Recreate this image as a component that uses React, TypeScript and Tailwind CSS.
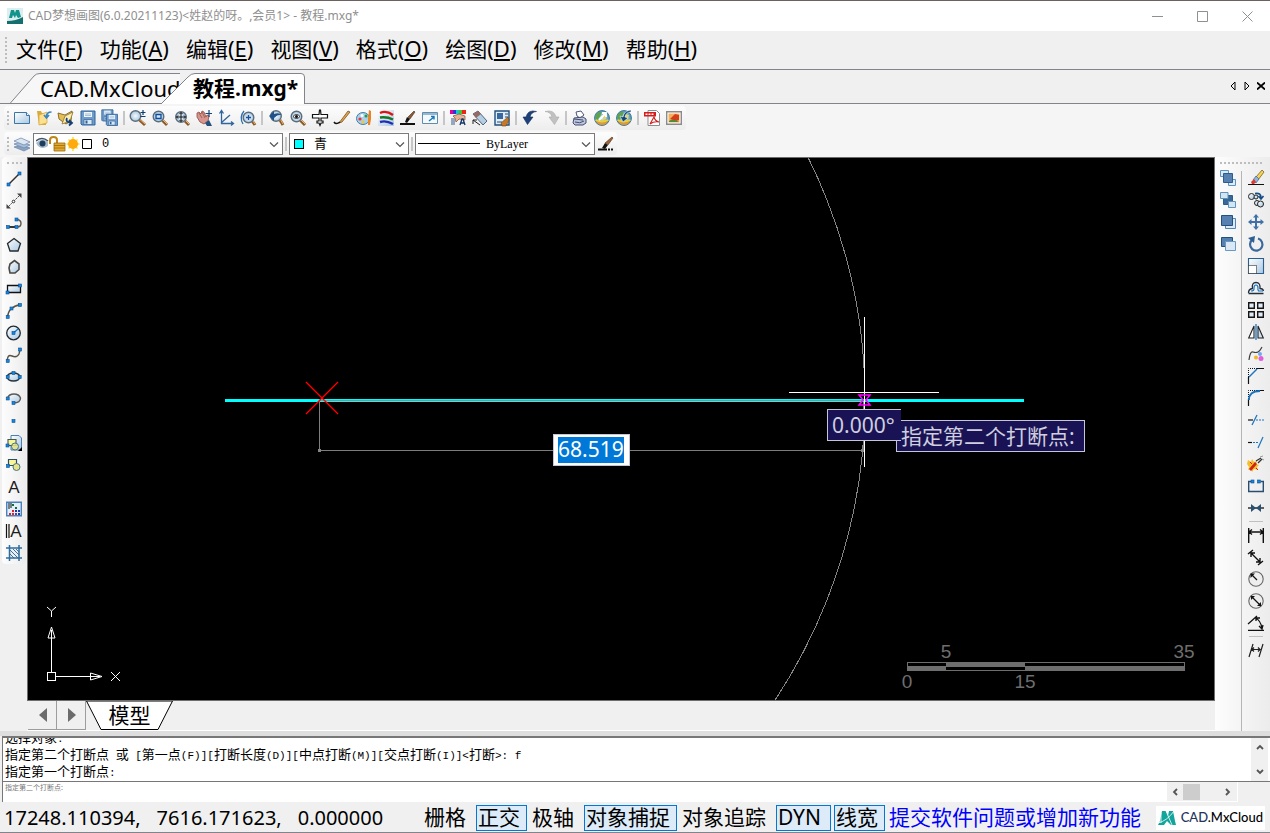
import { useState } from 'react'
import type { ReactNode } from 'react'
import clsx from 'clsx'

interface Tool {
  name: string
  icon: ReactNode
}

const MENUS = [
  { text: '文件', hotkey: 'F' },
  { text: '功能', hotkey: 'A' },
  { text: '编辑', hotkey: 'E' },
  { text: '视图', hotkey: 'V' },
  { text: '格式', hotkey: 'O' },
  { text: '绘图', hotkey: 'D' },
  { text: '修改', hotkey: 'M' },
  { text: '帮助', hotkey: 'H' },
]

const Lens = ({ children, x = 6.5, y = 6.5 }: { children?: ReactNode; x?: number; y?: number }) => (
  <>
    <path d={`M${x + 4} ${y + 4}L15 15`} stroke="#8a5a2a" strokeWidth="3" />
    <path d={`M${x + 4.5} ${y + 3.5}L15 14`} stroke="#f0b568" strokeWidth="1" />
    <circle cx={x} cy={y} r="5.300" fill="url(#lens)" stroke="#5b6d7d" strokeWidth="1.4" />
    {children}
  </>
)

const Globe = ({ children }: { children?: ReactNode }) => (
  <>
    <circle cx="8" cy="8" r="7.500" fill="url(#globe)" stroke="#356a8c" strokeWidth=".8" />
    <path d="M1.500 5q3-4 6-3l-1 4-3 4-2-1z" fill="#5da34b" />
    <path d="M9 4l4 1-1 4-3 1z" fill="#e9d26a" />
    <path d="M2 11q5 3 12 0l-2 3q-4 2-8 0z" fill="#e8952c" />
    <path d="M1.500 10q6 3 13 0" stroke="#f4cf2b" strokeWidth="1.8" fill="none" />
    {children}
  </>
)

const Floppy = ({ x = 0, y = 0, s = 1 }: { x?: number; y?: number; s?: number }) => (
  <g transform={`translate(${x} ${y}) scale(${s})`}>
    <path d="M1 1h14v14H2l-1-1z" fill="#6f9ccb" stroke="#2f629b" />
    <path d="M4 2h8v5H4z" fill="#eef5fb" />
    <path d="M5 4h6M5 5.500h6" stroke="#8aa9c8" strokeWidth=".7" />
    <path d="M4 9.500h8v5H4z" fill="#dbe7f2" stroke="#2f629b" strokeWidth=".7" />
    <path d="M5.500 10.500h2v3h-2z" fill="#2f629b" />
  </g>
)

const Node = ({ x, y }: { x: number; y: number }) => (
  <rect x={x - 1.5} y={y - 1.5} width="3" height="3" fill="#1687e0" stroke="#0b4f92" strokeWidth=".6" />
)

const STANDARD_TOOLS: Tool[][] = [
  [
    { name: '新建', icon: <><path d="M.5 2.500h12l3 3v8H.5z" fill="url(#paper)" stroke="#3b76a6" /><path d="M12.500 2.500v3h3" fill="#fff" stroke="#3b76a6" /></> },
    { name: '打开', icon: <><path d="M1 1h4l1 2h4v12H3z" fill="#d9ab3c" /><path d="M3 15V5l8-3v11z" fill="#fbe08f" stroke="#d9a536" strokeWidth=".7" /><path d="M15.500 2q-5 0-5 5M8 5l2.500 3L13 5" stroke="#3387c9" strokeWidth="1.7" fill="none" /></> },
    { name: '打开云图', icon: <><path d="M0 3l7 2 7-4-1 10-5 3-7-5z" fill="#e6be55" stroke="#7d6424" strokeWidth=".9" /><path d="M4 14l3-8 8-4-3 9z" fill="#fcedb0" stroke="#8d7432" strokeWidth=".8" /><path d="M9 8q-2 4 4 5M11 10l3 3-3 2.500" stroke="#143f77" strokeWidth="1.8" fill="none" /></> },
    { name: '保存', icon: <Floppy /> },
    { name: '另存为', icon: <><Floppy s={0.8} x={-1} y={-1} /><Floppy s={0.8} x={3.5} y={3.5} /></> },
  ],
  [
    { name: '实时缩放', icon: <Lens x={5.5} y={6}><path d="M13 0v5M10.500 2.500h5M10.500 6.500h5" stroke="#123d70" strokeWidth="1.2" /></Lens> },
    { name: '窗口缩放', icon: <Lens><path d="M4 4.500h5v4H4z" fill="#cfe6fb" stroke="#0d4c96" strokeWidth="1.3" /></Lens> },
    { name: '全部缩放', icon: <Lens x={7} y={7}><path d="M7 2.500v9M2.500 7h9M5.500 4L7 2.500 8.500 4M5.500 10L7 11.500 8.500 10M4 5.500L2.500 7 4 8.500M10 5.500L11.500 7 10 8.500" stroke="#111" fill="none" /></Lens> },
    { name: '平移', icon: <><path d="M1 3l2-1 2 2 1-3 2 1 2 5 1-2 2 1-1 5-4 3-4-2-3-5z" fill="#d6958d" stroke="#8e4943" strokeWidth=".8" /><path d="M3 3l3 5M6 2l3 6" stroke="#8e4943" strokeWidth=".7" /><path d="M9 13l4-3 3 6h-5z" fill="#23517f" /><path d="M13 0v7M9.500 3.500h6.500" stroke="#174577" strokeWidth="1.2" /></> },
    { name: '用户坐标', icon: <path d="M3.500 1v12.500H15M3 13L12 5M1.500 3.500l2-3 2 3M13 11.500l2.500 2-2.500 2" stroke="#2f66a0" strokeWidth="1.3" fill="none" /> },
    { name: '动态缩放', icon: <><Lens x={8.5} y={7.5}><path d="M8.500 5v5M6 7.500h5" stroke="#14529a" strokeWidth="1.3" /></Lens><path d="M4 1Q-1 7 3 14" stroke="#2a70b5" strokeWidth="1.3" fill="none" /></> },
  ],
  [
    { name: '上一视图', icon: <Lens x={8} y={6}><path d="M1 6l5-5v3q5-2 8 1-4-1-8 3v3z" fill="#20508a" /></Lens> },
    { name: '视图缩放', icon: <Lens><path d="M3 6.500q3.500-4 7 0-3.500 4-7 0z" fill="#fff" stroke="#333" /><circle cx="6.500" cy="6.500" r="1.500" fill="#111" /></Lens> },
    { name: '鸟瞰', icon: <path d="M7.500 0h1l.5 4.500h6.500V8H9v3h2v2H9l-1 2.500L7 13H5v-2h2V8H.5V4.500H7z" fill="#fff" stroke="#111" strokeWidth="1.2" /> },
    { name: '画笔', icon: <><path d="M5 13L14 1l2 1-8 10z" fill="#e1a649" stroke="#7e4f1c" strokeWidth=".8" /><path d="M0 12q2 3 6 0" stroke="#111" strokeWidth="1.500" fill="none" /></> },
    { name: '颜色', icon: <><ellipse cx="7" cy="8.500" rx="6.500" ry="6" fill="#a9d0e8" stroke="#417ea9" /><circle cx="4" cy="9" r="1.600" fill="#e33" /><circle cx="6" cy="5.500" r="1.500" fill="#fff" /><circle cx="10" cy="6" r="1.500" fill="#2b9a3d" /><circle cx="7" cy="12" r="1.500" fill="#f2c62c" /><path d="M13 0l2 1v8l-1 6h-2V9z" fill="#e98421" /></> },
    { name: '线型颜色', icon: <><path d="M0 0h16v16H0z" fill="url(#paper)" /><path d="M2 3q6-3 13 2" stroke="#e01313" strokeWidth="2.400" fill="none" /><path d="M2 7.500q7-1 13 2" stroke="#167623" strokeWidth="2.400" fill="none" /><path d="M2 12q6-2 13 2" stroke="#222bb8" strokeWidth="2.400" fill="none" /></> },
    { name: '特性画笔', icon: <><path d="M0 14h15" stroke="#111" strokeWidth="2" /><path d="M5 12l2-5 3 2-3 4z" fill="#111" /><path d="M8 7l6-6 1 1-5 7z" fill="#8c5a35" stroke="#332010" strokeWidth=".5" /></> },
    { name: '导出窗口', icon: <><path d="M.5 2.500h15v11H.5z" fill="#f3f9fd" stroke="#638caa" /><path d="M1 3h14v2H1z" fill="#96b9d2" /><path d="M7 11l5-4M9 6.500h3v3" stroke="#1976b9" strokeWidth="1.400" fill="none" /></> },
  ],
  [
    { name: '快速选择', icon: <><path d="M0 0h3v4H0z" fill="#ec008c" /><path d="M3 0h3v4H3z" fill="#2a38d8" /><path d="M6 0h3v4H6z" fill="#19c5cf" /><path d="M9 0h3v4H9z" fill="#4cc02d" /><path d="M12 0h4v4h-4z" fill="#eb2418" /><path d="M3 6l6-2 6 2v4l-6-1-3 3-1-4z" fill="#e7b394" stroke="#774e3b" strokeWidth=".7" /><path d="M1 8h4v7H1z" fill="#93a7bd" /><path d="M10 15l2-6h1l2 6M11 13h3" stroke="#123465" strokeWidth="1.300" fill="none" /></> },
    { name: '擦除', icon: <><path d="M1 4l5-3 9 10-4 4z" fill="#b5cee2" stroke="#54687c" /><path d="M1 4l5-3 3 3-5 4z" fill="#946c66" /><path d="M1 10l7 5M1 10v4M1 10h4" stroke="#222" /></> },
    { name: '块编辑', icon: <><path d="M1 1h14v14H1z" fill="#dfedf8" stroke="#214f7d" strokeWidth="1.400" /><path d="M3 3h6v6H3z" fill="#3768a0" /><path d="M11 4h3M11 7h3M3 12h5" stroke="#214f7d" /><path d="M14 7l1 3-3 6H8l-1-3z" fill="#c57826" stroke="#6d3c12" strokeWidth=".6" /></> },
  ],
  [
    { name: '撤销', icon: <path d="M14.500 1.500Q6-1 4 7H1l4.500 7.500L11 7H8q1-5 6.500-5.500z" fill="#1d4178" stroke="#16315e" strokeWidth=".6" /> },
    { name: '重做', icon: <path d="M1 1.500Q10-1 12 7h3l-4.500 7.500L5 7h3Q7 2 1 1.500z" fill="#c1c1c1" stroke="#aaa" strokeWidth=".6" /> },
  ],
  [
    { name: '打印', icon: <><path d="M4 2l5-1 3 4-4 3-3-2z" fill="#fff" stroke="#4d5678" /><path d="M2 8l9-1 3 2v4l-3 2H3l-2-2z" fill="#bcc5dc" stroke="#454e70" /><path d="M3 12q5 2 9-1M2 9l9 1" stroke="#454e70" fill="none" /></> },
    { name: '网页浏览', icon: <Globe><path d="M5 10l7-7M8 3h4v4" stroke="#fff" strokeWidth="1.800" fill="none" /></Globe> },
    { name: '网络同步', icon: <Globe><path d="M15 0Q8 1 7 7L4 6l3 6 5-4-3-1q1-5 6-5z" fill="#154676" stroke="#fff" strokeWidth=".5" /></Globe> },
  ],
  [
    { name: '输出PDF', icon: <><path d="M4 .5h8.500l3 3v12H4z" fill="#fff" stroke="#8d8d8d" /><path d="M0 2h12v4.500H0z" fill="#d31e1e" /><path d="M1.500 4.300h9" stroke="#fff" strokeWidth="1.600" strokeDasharray="2 1" /><path d="M6 14l4-7q1 4 5 5-5-1-9 2z" fill="none" stroke="#d31e1e" strokeWidth="1.100" /></> },
    { name: '输出图片', icon: <><path d="M.7 1.700h14.600v12.600H.7z" fill="#fff" stroke="#8b8b8b" strokeWidth="1.400" /><path d="M2.500 3.500h11v9h-11z" fill="#f5b05b" /><path d="M4 9l5-5 4 1v5l-3 1z" fill="#d63e1b" /><path d="M3 11q4-3 10 1H3z" fill="#4b8f38" /></> },
  ],
]

const DRAW_TOOLS: Tool[] = [
  { name: '直线', icon: <><path d="M2.500 13.500l11-11" stroke="#332f2b" strokeWidth="1.400" /><Node x={2.5} y={13.5} /><Node x={13.5} y={2.5} /></> },
  { name: '构造线', icon: <><path d="M1 15L15 1" stroke="#444" strokeDasharray="2 1" /><path d="M.5 15.500v-4.500l4.500 4.500zM15.500.5v4.500L11 .5z" fill="#444" /><circle cx="7.500" cy="8.500" r="1.300" fill="#fff" stroke="#333" /></> },
  { name: '多段线', icon: <><path d="M2 12h9q4 0 4-3.500T11 4.500" stroke="#5b564f" strokeWidth="1.400" fill="none" /><path d="M2 12h9" stroke="#111" strokeWidth="1.300" /><Node x={2} y={12} /><Node x={10.5} y={12} /><Node x={10.5} y={4.5} /></> },
  { name: '多边形', icon: <path d="M8 1.500l6.500 5-2.500 7.500H4L1.500 6.500z" fill="url(#paper)" stroke="#24292e" strokeWidth="1.300" /> },
  { name: '闭合轮廓', icon: <path d="M4 5l4.500-3.500L13 5v5.500L9 14H4L3 9z" fill="url(#paper)" stroke="#4b4744" strokeWidth="1.600" /> },
  { name: '矩形', icon: <><path d="M1.500 4.500h13v7h-13z" fill="url(#paper)" stroke="#111" strokeWidth="1.300" /><Node x={1.5} y={11.5} /><Node x={14} y={4.5} /></> },
  { name: '圆弧', icon: <><path d="M1.500 14.500Q2 4 14.500 1.500" fill="none" stroke="#5a5345" strokeWidth="1.400" /><Node x={1.7} y={14} /><Node x={5.5} y={5.5} /><Node x={14} y={2} /></> },
  { name: '圆', icon: <><circle cx="7.500" cy="8" r="6.800" fill="url(#paper)" stroke="#22282e" strokeWidth="1.300" /><path d="M7.500 8L12 4" stroke="#1375c7" strokeWidth="1.200" /><Node x={7.5} y={8} /></> },
  { name: '样条曲线', icon: <><path d="M1.500 14Q1 7 6 9t7-2l1-4" fill="none" stroke="#5a5345" strokeWidth="1.400" /><Node x={1.7} y={14} /><Node x={14} y={2.5} /></> },
  { name: '椭圆', icon: <><ellipse cx="7.500" cy="8" rx="6.500" ry="4" fill="url(#paper)" stroke="#26323c" strokeWidth="1.300" /><Node x={1.7} y={8} /><Node x={7.5} y={4} /><Node x={13.7} y={8} /></> },
  { name: '椭圆弧', icon: <><path d="M1.500 7Q3 3 8 3t6.500 4q0 5-7 5" fill="url(#paper)" stroke="#5b5a56" strokeWidth="1.400" /><Node x={1.7} y={7.500} /><Node x={7.5} y={12} /></> },
  { name: '点', icon: <Node x={7.5} y={8} /> },
  { name: '插入块', icon: <><path d="M5 .5h8l2.500 2.500v12H5z" fill="url(#paper)" stroke="#4a7fb0" /><path d="M2 4.500h8v6H2z" fill="#fbf59a" stroke="#3d5a57" strokeWidth="1.100" /><circle cx="9" cy="11.500" r="3.500" fill="#e6e285" fillOpacity=".85" stroke="#46768c" /><path d="M16 12v4h-4z" fill="#000" /><Node x={1.5} y={10.5} /></> },
  { name: '创建块', icon: <><path d="M2.500 2.500h8v6h-8z" fill="#fbf59a" stroke="#284f68" strokeWidth="1.200" /><circle cx="10.500" cy="10" r="3.500" fill="#e6e285" stroke="#46768c" /><Node x={2} y={9} /></> },
  { name: '文字', icon: <text x="8" y="14" textAnchor="middle" className="font-['Liberation_Sans'] text-[17px]" fill="#1c1c1c">A</text> },
  { name: '调色', icon: <><path d="M.7 1.200h14.600v13.600H.7z" fill="#e2f0fb" stroke="#4a82bd" strokeWidth="1.400" /><path d="M3 2v6M5 2v5" stroke="#111" /><path d="M6 3h2v2H6zM9 6h2v2H9z" fill="#176c30" /><path d="M6 9h2v2H6zM3 12h2v2H3zM6 12h2v2H6z" fill="#e32222" /><path d="M9 9h2v2H9zM12 9h2v2h-2zM12 12h2v2h-2z" fill="#2336a8" /><path d="M9 12h2v2H9z" fill="#7b2e96" /></> },
  { name: '多行文字', icon: <><path d="M.5 1v14M3 1v14" stroke="#111" strokeWidth="1.200" /><text x="10" y="14" textAnchor="middle" className="font-['Liberation_Sans'] text-[17px]" fill="#1c1c1c">A</text></> },
  { name: '填充', icon: <><path d="M3.500 3h10v10h-10z" fill="#e4f1fb" /><path d="M4 5l8 8M4 9l4 4M7 4l6 6M10 4l3 3" stroke="#2c4d6d" strokeWidth=".8" /><path d="M3.500 0v16M13 0v16M0 3h16M0 13h16" stroke="#2f6c9f" strokeWidth="1.500" /></> },
]

const ORDER_TOOLS: Tool[] = [
  { name: '置于顶层', icon: <><path d="M.5.500h8v6h-8zM8.500 9.500h7v6h-7z" fill="#dcebf6" stroke="#5e93bd" /><path d="M3.500 3.500h9v9h-9z" fill="#5681b0" stroke="#2c5c8e" /></> },
  { name: '置于底层', icon: <><path d="M3.500 3.500h9v9h-9z" fill="#396797" stroke="#2c5c8e" /><path d="M.5.500h7.500v6H.5zM8.500 9.500h7v6h-7z" fill="#d4e5f2" stroke="#5e93bd" /></> },
  { name: '前移一层', icon: <><path d="M5.500 4.500h10v10h-10z" fill="#dcebf6" stroke="#4f86b5" /><path d="M1.500 1.500h11v10h-11z" fill="#5681b0" stroke="#24507f" /></> },
  { name: '后移一层', icon: <><path d="M1.500 1.500h11v9h-11z" fill="#5681b0" stroke="#24507f" /><path d="M5.500 5.500h10v9h-10z" fill="#d9e8f4" stroke="#6799c3" /></> },
]

const MODIFY_TOOLS: Tool[][] = [
  [
    { name: '删除', icon: <><path d="M0 14.500h16" stroke="#111" /><path d="M8 7l6-7 2 2-6 8z" fill="#f5d44f" stroke="#77602a" strokeWidth=".8" /><path d="M5 10l3-4 3 3-3 4z" fill="#8fb5df" stroke="#416489" strokeWidth=".7" /><path d="M3 12l3-3 2 3-2 2H4z" fill="#da3b32" /></> },
    { name: '复制', icon: <><circle cx="3.500" cy="4.500" r="3" fill="url(#paper)" stroke="#222" /><circle cx="8" cy="5" r="2" fill="url(#paper)" stroke="#222" /><circle cx="9" cy="11" r="2.500" fill="url(#paper)" stroke="#222" /><circle cx="12.500" cy="12" r="3" fill="url(#paper)" stroke="#222" /><path d="M7 1.500q6-1 6 4M10.500 4l2.500 3 2.500-3" stroke="#154c83" strokeWidth="1.600" fill="none" /></> },
    { name: '移动', icon: <path d="M8 0l3 3.500H9V7h3.500V5L16 8l-3.500 3V9H9v3.500h2L8 16l-3-3.500h2V9H3.500v2L0 8l3.500-3v2H7V3.500H5z" fill="#3f71a8" /> },
    { name: '旋转', icon: <><path d="M4.500 3.500A6.200 6.200 0 1 0 10 2.500" stroke="#39689c" strokeWidth="2.200" fill="none" /><path d="M0 2l7-2-1 7z" fill="#2d5f95" /></> },
    { name: '缩放', icon: <><path d="M.5.500h15v15H.5z" fill="url(#paper)" stroke="#2b5d8e" strokeWidth="1.100" /><path d="M.5 7.500h8v8h-8z" fill="#fff" stroke="#111" strokeDasharray="1 1" /></> },
    { name: '偏移', icon: <><path d="M.5 13.500h15M.5 13q0-4 4-4.500-1-6 3.500-6t4 6q3 0 3.500 2.500" stroke="#232f3a" strokeWidth="1.300" fill="none" /><path d="M15 11h-4.500q-1-2-.5-3 0-3-2-3T6 8q.5 3-3 3" fill="none" stroke="#1575c8" strokeWidth="1.200" /></> },
    { name: '阵列', icon: <path d="M.700.700h5.600v5.600H.7zM9.700.700h5.600v5.600H9.700zM.7 9.700h5.600v5.600H.7zM9.700 9.700h5.600v5.600H9.700z" fill="#dfebf6" stroke="#151515" strokeWidth="1.400" /> },
    { name: '镜像', icon: <><path d="M6 2v12H.7z" fill="#fff" stroke="#222" strokeWidth="1.100" /><path d="M10 2v12h5.300z" fill="#cfe0f0" stroke="#222" strokeWidth="1.100" /><path d="M8 0v16" stroke="#1b74c1" strokeWidth="1.300" /></> },
    { name: '样条编辑', icon: <><path d="M1 14Q2 5 5 6t5 0 4-5" stroke="#3e3e3e" strokeWidth="1.200" fill="none" /><circle cx="8" cy="11.500" r="2" fill="#efb822" /><circle cx="12" cy="8" r="2" fill="#74a5ef" /><circle cx="13" cy="12.500" r="2.500" fill="#e05edc" /></> },
    { name: '倒角', icon: <><path d="M.5 9v7M8 .5h8" stroke="#111" strokeWidth="1.200" /><path d="M.5 9V.5H8" stroke="#111" strokeDasharray="1 1" fill="none" /><path d="M1 9l8-8" stroke="#1b74c1" strokeWidth="1.500" /></> },
    { name: '圆角', icon: <><path d="M.5 9v7M9 .5h7" stroke="#111" strokeWidth="1.200" /><path d="M.5 9V.5H9" stroke="#111" strokeDasharray="1 1" fill="none" /><path d="M1 10Q1 1 12 1" stroke="#1b74c1" strokeWidth="1.800" fill="none" /></> },
    { name: '修剪', icon: <><path d="M0 8h5" stroke="#111" strokeWidth="1.200" /><path d="M8 8h8" stroke="#1b74c1" strokeWidth="1.200" strokeDasharray="2 1" /><path d="M4 13l5-10" stroke="#1b74c1" strokeWidth="1.200" /></> },
    { name: '延伸', icon: <><path d="M0 8.500h4" stroke="#111" strokeWidth="1.200" /><path d="M5 8.500h6" stroke="#1b74c1" strokeWidth="1.200" strokeDasharray="2 1" /><path d="M10 14l5-11" stroke="#1b74c1" strokeWidth="1.200" /></> },
    { name: '分解', icon: <><path d="M0 4l3 2 1-3 2 3 3-1-1 3 3 1-2 2 1 3-4-1-2 3-1-3-3 1 1-3-2-3z" fill="#f6bf27" /><path d="M1 13l6-7 2 2-6 7z" fill="#cf241a" /><path d="M2 6l2 2M8 12l2 2" stroke="#cf241a" /><path d="M8 5l5-3M10 7l4-4" stroke="#333" strokeWidth="1.300" /><path d="M12 1l3-1M14 3l2 1" stroke="#999" /></> },
    { name: '打断', icon: <><path d="M3 3.500H.700v10h14.600v-10H13" fill="none" stroke="#294e72" strokeWidth="1.400" /><Node x={4.500} y={3.500} /><Node x={11} y={3.500} /></> },
    { name: '合并', icon: <><path d="M0 8h16" stroke="#111" strokeWidth="1.300" /><path d="M3 4l5 4-5 4zM13 4L8 8l5 4z" fill="#285071" /></> },
  ],
  [
    { name: '线性标注', icon: <path d="M.7 1v15M15.300 1v15M1 5h14M4 2.500L1 5l3 2.500M12 2.500L15 5l-3 2.500" stroke="#111" strokeWidth="1.400" fill="none" /> },
    { name: '对齐标注', icon: <path d="M0 5l5-4M10 16l5-4M3 4l9 9M3 8V4h4M12 9v4H8" stroke="#111" strokeWidth="1.400" fill="none" /> },
    { name: '半径标注', icon: <><circle cx="8" cy="8" r="7.200" fill="#eee" stroke="#666" strokeWidth="1.100" /><path d="M3 3l6 6" stroke="#111" strokeWidth="1.200" /><path d="M2.500 2.500h4.500L2.500 7z" fill="#111" /></> },
    { name: '直径标注', icon: <><circle cx="8" cy="8" r="7.200" fill="#eee" stroke="#666" strokeWidth="1.100" /><path d="M3 3l10 10" stroke="#111" strokeWidth="1.200" /><path d="M3 3h4L3 7zM13 13V9l-4 4z" fill="#111" /></> },
    { name: '角度标注', icon: <path d="M0 15.300h16M0 9l9-8M7 3q6 2 7 11M8 6V3h4M11 11l3 3 1-4" stroke="#111" strokeWidth="1.300" fill="none" /> },
  ],
  [{ name: '弧长标注', icon: <path d="M1 15L5 2M11 15l4-13M4 7.500h8M6 5.500l-2 2 2 2M10 5.500l2 2-2 2" stroke="#222" strokeWidth="1.200" fill="none" /> }],
]

const COMMAND_LOG = [
  '选择对象:',
  '指定第二个打断点 或 [第一点(F)][打断长度(D)][中点打断(M)][交点打断(I)]<打断>: f',
  '指定第一个打断点:',
]

function ToolButton({ tool }: { tool: Tool }) {
  return (
    <button type="button" aria-label={tool.name} className="grid size-[22px] shrink-0 place-items-center hover:bg-sky-100">
      <svg viewBox="0 0 16 16" fill="none" className="size-4 overflow-visible">{tool.icon}</svg>
    </button>
  )
}

function Grip({ horizontal = false }: { horizontal?: boolean }) {
  return (
    <div
      className={clsx(
        'shrink-0 border-[#bdbdbd] border-dotted',
        horizontal ? 'border-t-2' : 'border-l-2',
      )}
    />
  )
}

const Separator = () => <div className="mx-[2px] h-[14px] w-[2px] shrink-0 bg-[#c6c6c6]" />

function Chevron({ className }: { className?: string }) {
  return (
    <svg viewBox="0 0 10 6" fill="none" className={clsx('h-[6px] w-[10px]', className)}>
      <path d="M1 .5l4 4 4-4" stroke="#555" strokeWidth="1.200" />
    </svg>
  )
}

// heavier arrow used by the scroll bars
function ScrollArrow({ className }: { className?: string }) {
  return (
    <svg viewBox="0 0 8 6" fill="none" className={clsx('h-[6px] w-2', className)}>
      <path d="M1 1l3 3 3-3" stroke="#555" strokeWidth="1.800" />
    </svg>
  )
}

interface ComboProps {
  label: string
  options: string[]
  width: string
  textStyle: string
  children: ReactNode
}

function Combo({ label, options, width, textStyle, children }: ComboProps) {
  return (
    <div className={clsx('relative flex h-[22px] items-center border border-[#7a7a7a] bg-white', width)}>
      {children}
      <select aria-label={label} className={clsx('h-full min-w-0 flex-1 appearance-none bg-transparent text-black outline-none', textStyle)}>
        {options.map((o) => (
          <option key={o}>{o}</option>
        ))}
      </select>
      <Chevron className="pointer-events-none absolute top-[8px] right-[3px]" />
    </div>
  )
}

function MxLogo({ className }: { className?: string }) {
  return (
    <svg viewBox="0 0 18 14" className={className}>
      <path d="M4 0h4l2 5 1-5h4l2 10 1 4h-5l-4-4-3 4H0l2-4z" fill="#12a59b" />
      <path d="M0 12Q9 10 16 0M8 0l6 14M3 2v10" stroke="#fff" strokeWidth=".8" fill="none" />
    </svg>
  )
}

function TitleBar() {
  return (
    <header className="flex h-[31px] items-center border-t border-[#6b6260] bg-white pl-[7px]">
      <svg viewBox="0 0 16 16" className="size-4">
        <path d="M0 0h16v16H0z" fill="#dceeed" />
        <path d="M0 13q9 0 16-4v7H0z" fill="#14706f" />
        <path d="M2 10l2-8h3l1 3 1-3h3l2 7-3 1-2-3-1 3-2-3-1 3z" fill="#12938b" />
      </svg>
      <h1 className="ml-[5px] text-[12px] text-[#8f8f8f]">CAD梦想画图(6.0.20211123)&lt;姓赵的呀。,会员1&gt; - 教程.mxg*</h1>
      <div className="ml-auto flex">
        {[
          { name: '最小化', d: 'M0 5.500h11' },
          { name: '最大化', d: 'M.5.500h10v10H.5z' },
          { name: '关闭', d: 'M.5.500l10 10M10.500.500l-10 10' },
        ].map((b) => (
          <button key={b.name} type="button" aria-label={b.name} className="grid h-7 w-[45px] place-items-center">
            <svg viewBox="0 0 11 11" fill="none" stroke="#909090" className="size-[11px]"><path d={b.d} /></svg>
          </button>
        ))}
      </div>
    </header>
  )
}

function MenuBar() {
  return (
    <nav className="flex h-[39px] items-center border-b border-[#83838b] bg-[#f0f0f0] pl-[5px]">
      <div className="flex h-[26px]"><Grip /></div>
      <ul className="ml-[9px] flex gap-[17px] text-[21px] text-black">
        {MENUS.map((m) => (
          <li key={m.hotkey}>
            <button type="button" className="leading-7 whitespace-nowrap">
              {m.text}
              <span className="text-[22px]">(<span className="underline underline-offset-2">{m.hotkey}</span>)</span>
            </button>
          </li>
        ))}
      </ul>
    </nav>
  )
}

function DocumentTabs() {
  return (
    <div className="relative flex h-[34px] items-end bg-[#f0f0f0]">
      <div className="absolute inset-x-0 bottom-0 h-px bg-[#83838b]" />
      <button type="button" className="relative ml-[10px] h-[31px] w-[170px] overflow-hidden">
        <svg viewBox="0 0 180 31" fill="none" className="absolute top-0 left-0 h-[31px] w-[180px]">
          <path d="M0 30.500L24 3q2-2.500 6-2.500h150v30z" fill="#f7f7f7" stroke="#83838b" />
        </svg>
        <span className="relative block pl-[30px] text-left text-[22px] leading-[31px] text-black">CAD.MxCloud</span>
      </button>
      <button type="button" className="relative -ml-[19px] h-[31px] w-[144px]">
        <svg viewBox="0 0 144 31" fill="none" className="absolute inset-0 h-[31px] w-[144px]">
          <path d="M0 31L27 4q3-3.500 7-3.500h106q3.500 0 3.500 3.500v27" fill="#fff" stroke="#83838b" />
        </svg>
        <span className="relative block pl-8 text-left text-[21px] leading-[31px] font-bold whitespace-nowrap text-black">教程.mxg*</span>
      </button>
      <div className="mr-[5px] mb-[13px] ml-auto flex items-center gap-[6px]">
        <button type="button" aria-label="上一个"><svg viewBox="0 0 8 10" className="h-[10px] w-2"><path d="M6 1v8L2 5z" fill="none" stroke="#000" /></svg></button>
        <button type="button" aria-label="下一个"><svg viewBox="0 0 8 10" className="h-[10px] w-2"><path d="M2 1v8l4-4z" fill="none" stroke="#000" /></svg></button>
        <button type="button" aria-label="关闭文档"><svg viewBox="0 0 8 8" className="size-2"><path d="M0 .5l8 7M8 .5l-8 7" stroke="#000" strokeWidth="1.800" /></svg></button>
      </div>
    </div>
  )
}

function Toolbars() {
  return (
    <div className="flex flex-col items-start gap-[2px] bg-[#f5f5f5] pt-[2px] pb-[2px] pl-1">
      <div className="flex h-6 items-center rounded bg-linear-to-b from-[#fdfdfd] to-[#ededed] pr-px pl-[3px]">
        <div className="mr-[2px] flex h-[14px]"><Grip /></div>
        {STANDARD_TOOLS.map((group, i) => (
          <div key={group[0].name} className="flex items-center">
            {i > 0 && <Separator />}
            {group.map((t) => <ToolButton key={t.name} tool={t} />)}
          </div>
        ))}
      </div>
      <div className="flex h-[23px] items-center rounded bg-linear-to-b from-[#fdfdfd] to-[#ededed] pl-[3px]">
        <div className="mr-[2px] flex h-[14px]"><Grip /></div>
        <ToolButton
          tool={{
            name: '图层',
            icon: (
              <g stroke="#6583a8" strokeWidth=".7">
                <path d="M0 11l7-2 9 3-6 3z" fill="#8aa3c2" />
                <path d="M0 8l7-2 9 3-6 3z" fill="#a9bfd8" />
                <path d="M0 5l7-3 9 4-6 3z" fill="#dbe6f2" />
              </g>
            ),
          }}
        />
        <Combo label="图层" options={['0']} width="w-[250px]" textStyle="pl-[6px] font-['Liberation_Mono'] text-[12px]">
          <svg viewBox="0 0 60 16" fill="none" className="ml-[2px] h-4 w-[60px] shrink-0">
            <path d="M0 7q6-6 12-1v4q-6 4-10 0z" fill="#a9bacb" />
            <circle cx="6.500" cy="7.500" r="3" fill="#1e3c5c" />
            <path d="M0 5q6-5 12 0" stroke="#42566b" strokeWidth="1.500" />
            <path d="M14 8V4q0-3 3.500-3T21 4v3" stroke="#bd8617" strokeWidth="2" />
            <path d="M18 7h11v8H18z" fill="#e0a92c" stroke="#9c6b0e" strokeWidth=".8" />
            <path d="M18 9.500h11M18 12h11" stroke="#9c6b0e" strokeWidth=".8" />
            <path d="M37 1v14M30.500 8h13M32.500 3.500l9 9M41.500 3.500l-9 9" stroke="#f5e022" strokeWidth="1.400" />
            <circle cx="37" cy="8" r="5" fill="#ffab10" />
            <path d="M46.500 3.500h9v9h-9z" fill="#fff" stroke="#000" />
          </svg>
        </Combo>
        <Separator />
        <Combo label="颜色" options={['青']} width="w-[120px]" textStyle="pl-[10px] text-[13px]">
          <span className="ml-1 size-[10px] shrink-0 border border-black bg-[#00ffff]" />
        </Combo>
        <Separator />
        <Combo label="线型" options={['ByLayer']} width="w-[180px]" textStyle="pl-[6px] font-['Liberation_Serif'] text-[12px]">
          <span className="ml-[2px] h-px w-[62px] shrink-0 bg-black" />
        </Combo>
        <ToolButton
          tool={{
            name: '线宽',
            icon: (
              <>
                <path d="M0 13.500h9" stroke="#111" strokeWidth="2" />
                <path d="M10 13.500h6" stroke="#111" strokeWidth="2" strokeDasharray="2 1" />
                <path d="M4 12l3-5 3 2-3 4z" fill="#111" />
                <path d="M7 7l7-6 1 1-5 7z" fill="#a06237" stroke="#332010" strokeWidth=".5" />
              </>
            ),
          }}
        />
      </div>
    </div>
  )
}

function DrawingCanvas({ distance, onDistance }: { distance: string; onDistance: (v: string) => void }) {
  return (
    <main className="relative min-h-[500px] flex-1 overflow-hidden border border-[#6d6d6d] bg-black">
      <svg fill="none" className="absolute inset-0 size-full">
        <g transform="translate(-28 -158)">
          <g shapeRendering="crispEdges">
            <circle cx="320" cy="400" r="545" stroke="#858585" />
            <path d="M225 400.500h799" stroke="#00ffff" strokeWidth="3" />
            <path d="M320 400.500h544" stroke="#a08484" />
            <path d="M319.500 400v50.500H863.500V402" stroke="#7d7d7d" />
            <path d="M318 449h3v3h-3zM861 449h4v3h-4z" fill="#858585" />
            <path d="M789 392.500h150M864.500 317v150" stroke="#fff" />
          </g>
          <path d="M306 382l32 32M338 382l-32 32" stroke="#ff0000" strokeWidth="1.400" />
          <path d="M859 395h11l-4 5 4 5h-11l4-5z" stroke="#ff00ff" strokeWidth="1.500" />
        </g>
      </svg>

      {/* dynamic input */}
      <div className="absolute top-[276px] left-[525px] flex h-8 w-[77px] border border-[#c3c7de] bg-white p-[2px] px-1">
        <input
          aria-label="距离"
          value={distance}
          onChange={(e) => onDistance(e.target.value)}
          className="w-[66px] bg-[#0078d7] text-[21px] text-white outline-none"
        />
      </div>
      <div className="absolute top-[262px] left-[868px] h-8 border border-[#c5c5da] bg-[#191355] pr-[9px] pl-1 text-[21px] leading-[30px] whitespace-nowrap text-[#cfcfdf]">
        指定第二个打断点:
      </div>
      <div className="absolute top-[251px] left-[799px] h-8 w-[74px] border border-r-0 border-[#c5c5da] bg-[#191355] pl-1 text-[21px] leading-[30px] text-[#cfcfdf]">
        0.000°
      </div>

      {/* UCS axes */}
      <svg viewBox="0 0 80 80" fill="none" stroke="#fff" className="absolute bottom-[18px] left-[16px] size-20">
        <g shapeRendering="crispEdges">
          <path d="M3.500 70.500h8v8h-8zM7.500 70V36M12 74.500h34" />
        </g>
        <path d="M7.500 25L4 36h7zM7.500 28v8M58 74.500L46.500 71v7zM46 74.500h10" />
        <path d="M3 5l4.500 4L12 5M7.500 9v6M67 70l9 9M76 70l-9 9" />
      </svg>

      {/* scale bar */}
      <svg viewBox="0 0 296 50" className="absolute right-[17px] bottom-[8px] h-[50px] w-[296px]">
        <g shapeRendering="crispEdges">
          <path d="M6.500 20.500h277v8h-277z" fill="#000" stroke="#6e6e6e" />
          <path d="M7 24h38v4H7zM45 21h79v4H45zM124 24h159v4H124z" fill="#6e6e6e" />
        </g>
        <g fill="#6e6e6e" textAnchor="middle" className="font-['Liberation_Sans'] text-[19px]">
          <text x="45" y="16">5</text>
          <text x="283" y="16">35</text>
          <text x="6" y="46">0</text>
          <text x="124" y="46">15</text>
        </g>
      </svg>
    </main>
  )
}

function LayoutTabs() {
  return (
    <div className="flex h-[30px] items-start border-b border-white bg-[#f0f0f0] pl-px">
      {['M9 1v14L1 8z', 'M1 1v14l8-7z'].map((d, i) => (
        <button
          key={d}
          type="button"
          aria-label={i === 0 ? '上一个布局' : '下一个布局'}
          className="grid h-[29px] w-[29px] place-items-center border-r border-b border-[#9d9d9d] pl-[2px]"
        >
          <svg viewBox="0 0 10 16" className="h-4 w-[10px]"><path d={d} fill="#6b6b6b" /></svg>
        </button>
      ))}
      <button type="button" className="relative h-[29px] w-[87px] text-[21px] leading-[29px] text-black">
        <svg viewBox="0 0 87 29" className="absolute inset-0 h-[29px] w-[87px]">
          <path d="M.5 0L15 28.500h57L86.500 0z" fill="#fff" stroke="#000" />
        </svg>
        <span className="relative">模型</span>
      </button>
    </div>
  )
}

function RightTools() {
  return (
    <aside className="flex w-[55px] shrink-0 flex-col bg-linear-to-r from-[#fdfdfd] to-[#ececec]">
      <div className="mt-[5px] mr-2 ml-[5px] flex h-[5px] flex-col"><Grip horizontal /></div>
      <div className="flex flex-1">
        <div className="flex w-[26px] flex-col items-center">
          {ORDER_TOOLS.map((t) => <ToolButton key={t.name} tool={t} />)}
        </div>
        <div className="mt-1 w-px bg-[#b5b5b5]" />
        <div className="flex flex-1 flex-col items-center">
          {MODIFY_TOOLS.map((group, i) => (
            <div key={group[0].name} className="flex flex-col items-center">
              {i > 0 && <div className="my-[2px] h-px w-[14px] bg-[#c0c0c0]" />}
              {group.map((t) => <ToolButton key={t.name} tool={t} />)}
            </div>
          ))}
        </div>
      </div>
    </aside>
  )
}

// Latin characters sit in half-width cells next to full-width Chinese ones
function LogLine({ text }: { text: string }) {
  const parts = text.split(/([\x20-\x7e]+)/)
  return (
    <p className="h-[17px] leading-[17px] whitespace-pre">
      {parts.map((p, i) => (
        <span key={i} className={i % 2 ? "font-['Liberation_Mono'] text-[11px]" : 'text-[13px]'}>{p}</span>
      ))}
    </p>
  )
}

function CommandPanel() {
  const [command, setCommand] = useState('指定第二个打断点:')

  return (
    <section className="border-t-[5px] border-[#dedede] bg-[#f0f0f0] pl-[2px]">
      <div className="flex h-[46px] border-t-2 border-b border-l border-[#777] bg-white">
        <div className="flex flex-1 flex-col justify-end overflow-hidden pb-[2px] pl-[2px] text-black">
          {COMMAND_LOG.map((line) => <LogLine key={line} text={line} />)}
        </div>
        <div className="mr-[2px] flex w-[17px] flex-col items-center justify-between bg-[#f0f0f0] py-[6px]">
          <ScrollArrow className="rotate-180" />
          <ScrollArrow />
        </div>
      </div>
      <div className="flex h-5 border-l border-[#777]">
        <input
          aria-label="命令"
          value={command}
          onChange={(e) => setCommand(e.target.value)}
          className="min-w-0 flex-1 bg-white pb-2 pl-[2px] text-[7px] text-[#777] outline-none"
        />
        <div className="mr-[32px] flex w-[71px] items-center border-r border-b border-white bg-[#f0f0f0] pr-[5px] pl-1">
          <ScrollArrow className="rotate-90" />
          <div className="mr-auto ml-1 h-4 w-[17px] bg-[#cdcdcd]" />
          <ScrollArrow className="-rotate-90" />
        </div>
      </div>
      <div className="h-px" />
    </section>
  )
}

function StatusBar() {
  const [modes, setModes] = useState([
    { name: '栅格', on: false },
    { name: '正交', on: true },
    { name: '极轴', on: false },
    { name: '对象捕捉', on: true },
    { name: '对象追踪', on: false },
    { name: 'DYN', on: true },
    { name: '线宽', on: true },
  ])

  const toggle = (name: string) => {
    setModes(modes.map((m) => (m.name === name ? { ...m, on: !m.on } : m)))
  }

  return (
    <footer className="flex h-[30px] items-center border-b border-[#83838b] bg-[#f0f0f0] pl-1 text-[21px] whitespace-nowrap text-black">
      <div className="flex w-[418px] shrink-0 gap-4 text-[20px]">
        <span>17248.110394,</span>
        <span>7616.171623,</span>
        <span>0.000000</span>
      </div>
      <div className="flex gap-[3px]">
        {modes.map((m) => (
          <button
            key={m.name}
            type="button"
            aria-pressed={m.on}
            onClick={() => toggle(m.name)}
            className={clsx(
              'flex h-[26px] items-center border pl-px',
              m.name.length === 4 ? 'w-[93px]' : m.name === 'DYN' ? 'w-[55px]' : 'w-[51px]',
              m.on ? 'border-[#0078d7] bg-[#dcebf7]' : 'border-transparent',
            )}
          >
            {m.name}
          </button>
        ))}
      </div>
      <a href="#feedback" className="ml-1 text-[#0000ff]">提交软件问题或增加新功能</a>
      <div className="mr-[5px] ml-auto flex h-6 items-center gap-[5px] bg-white px-[2px] text-[12px]">
        <MxLogo className="h-[14px] w-[18px]" />
        <span className="font-['Lato'] text-[13px] font-medium"><span className="text-[#25345f]">CAD</span>.MxCloud</span>
      </div>
    </footer>
  )
}

export default function App() {
  const [distance, setDistance] = useState('68.519')

  return (
    <div className="flex min-h-screen flex-col bg-[#f0f0f0] font-['Noto_Sans','Noto_Sans_CJK_SC',sans-serif]">
      <svg className="absolute size-0" aria-hidden="true">
        <defs>
          <linearGradient id="paper" x1="0" y1="0" x2="1" y2="1">
            <stop stopColor="#fff" />
            <stop offset="1" stopColor="#a8c8e2" />
          </linearGradient>
          <radialGradient id="lens">
            <stop stopColor="#f4faff" />
            <stop offset="1" stopColor="#a8c6dd" />
          </radialGradient>
          <radialGradient id="globe">
            <stop stopColor="#d3effa" />
            <stop offset="1" stopColor="#3f8fba" />
          </radialGradient>
        </defs>
      </svg>
      <TitleBar />
      <MenuBar />
      <DocumentTabs />
      <Toolbars />
      <div className="flex flex-1">
        <aside className="flex w-[27px] shrink-0 flex-col pr-px pl-[2px]">
          <div className="flex flex-col items-center rounded bg-linear-to-r from-[#fdfdfd] to-[#ececec]">
            <div className="mt-[5px] flex h-[6px] w-[15px] flex-col"><Grip horizontal /></div>
            {DRAW_TOOLS.map((t) => <ToolButton key={t.name} tool={t} />)}
          </div>
        </aside>
        <div className="flex min-w-0 flex-1 flex-col">
          <DrawingCanvas distance={distance} onDistance={setDistance} />
          <LayoutTabs />
        </div>
        <RightTools />
      </div>
      <CommandPanel />
      <StatusBar />
    </div>
  )
}
